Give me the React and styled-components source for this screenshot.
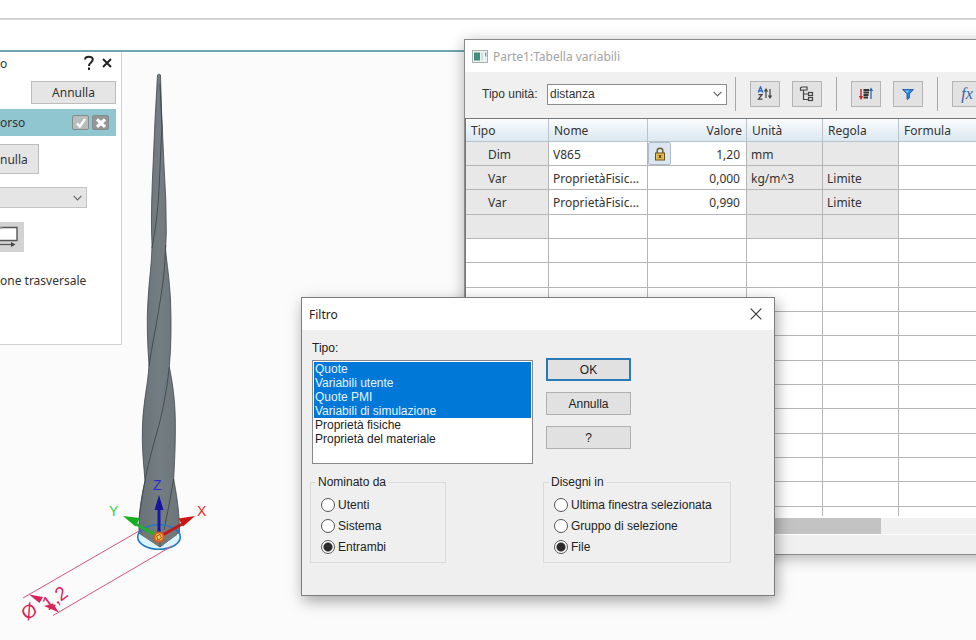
import { useState } from "react"
import styled, { createGlobalStyle } from "styled-components";

const variables = [
    { type: "Dim", name: "V865", locked: true, value: "1,20", unit: "mm", rule: "" },
    { type: "Var", name: "ProprietàFisic...", value: "0,000", unit: "kg/m^3", rule: "Limite" },
    { type: "Var", name: "ProprietàFisic...", value: "0,990", unit: "", rule: "Limite" },
    { type: "", name: "", value: "", unit: "", rule: "" },
]

const emptyRows = Array.from({ length: 11 }, (_, i) => i)

const filterTypes = [
    "Quote",
    "Variabili utente",
    "Quote PMI",
    "Variabili di simulazione",
    "Proprietà fisiche",
    "Proprietà del materiale",
]

export default function App(){
    return(
        <Page>
            <GlobalStyle />
            <Ribbon />
            <TabStrip />
            <Workspace>
                <Model />
                <CommandPanel />
                <VariableTable />
                <FilterDialog />
            </Workspace>
        </Page>
    )
}

function CommandPanel(){
    return(
        <Panel>
            <PanelTitle>
                <span>o</span>
                <PanelTools>
                    <PlainButton aria-label="Guida">
                        <svg width="12" height="16" viewBox="0 0 12 16" fill="none" stroke="#222" strokeWidth="2">
                            <path d="M2 4.5C2 0.8 9.8 0.6 9.8 4.6C9.8 7.6 6 7.4 6 11" />
                            <path d="M6 12.6V15" />
                        </svg>
                    </PlainButton>
                    <PlainButton aria-label="Chiudi pannello">
                        <svg width="10" height="10" viewBox="0 0 10 10" stroke="#222" strokeWidth="2">
                            <path d="M1 1L9 9M9 1L1 9" />
                        </svg>
                    </PlainButton>
                </PanelTools>
            </PanelTitle>
            <CancelButton>Annulla</CancelButton>
            <StepBar>
                <span>orso</span>
                <StepTools>
                    <StepButton aria-label="Accetta" $color="#b9bcbc">
                        <svg width="12" height="12" viewBox="0 0 12 12" fill="none" stroke="#fff" strokeWidth="2.4">
                            <path d="M2 6.4L4.8 9.4L10 2" />
                        </svg>
                    </StepButton>
                    <StepButton aria-label="Rifiuta" $color="#929898">
                        <svg width="12" height="12" viewBox="0 0 12 12" stroke="#fff" strokeWidth="3.2">
                            <path d="M2 2.4L10 9.8M10 2.4L2 9.8" />
                        </svg>
                    </StepButton>
                </StepTools>
            </StepBar>
            <ResetButton>nulla</ResetButton>
            <PanelSelectBox>
                <PanelSelect aria-label="Metodo">
                    <option></option>
                </PanelSelect>
                <Chevron />
            </PanelSelectBox>
            <ShapeButton aria-label="Sezione">
                <svg width="20" height="24" viewBox="0 0 20 24">
                    <path d="M-1 2.5H17V15.500H-1Z" fill="#fff" stroke="#555" strokeWidth="1.4" />
                    <path d="M-1 1.500L1 4.500L3 2.500" fill="#999" />
                    <path d="M0 19.500H13" stroke="#555" strokeWidth="1.2" />
                    <path d="M11 17L15.500 19.500L11 22Z" fill="#444" />
                </svg>
            </ShapeButton>
            <PanelText>one trasversale</PanelText>
        </Panel>
    )
}

function VariableTable(){
    return(
        <TableWindow>
            <WindowTitle $muted>
                <svg width="16" height="13" viewBox="0 0 16 13">
                    <rect x="0.5" y="0.5" width="15" height="12" fill="#eef1f1" stroke="#a9b0b0" />
                    <rect x="2" y="2.5" width="6" height="8" fill="#3f8f80" />
                    <rect x="9" y="2.5" width="2" height="8" fill="#d5dcdc" />
                    <rect x="13" y="2.5" width="1.4" height="4" fill="#6fa79d" />
                </svg>
                Parte1:Tabella variabili
            </WindowTitle>
            <Toolbar>
                <UnitLabel htmlFor="unit">Tipo unità:</UnitLabel>
                <UnitSelectBox>
                    <UnitSelect id="unit">
                        <option>distanza</option>
                    </UnitSelect>
                    <Chevron />
                </UnitSelectBox>
                <Separator />
                <ToolGroup>
                    <ToolButton aria-label="Ordina"><SortIcon /></ToolButton>
                    <ToolButton aria-label="Struttura"><TreeIcon /></ToolButton>
                </ToolGroup>
                <Separator />
                <ToolGroup>
                    <ToolButton aria-label="Ordine valori"><OrderIcon /></ToolButton>
                    <ToolButton aria-label="Filtro"><FunnelIcon /></ToolButton>
                </ToolGroup>
                <Separator />
                <ToolGroup>
                    <ToolButton aria-label="Funzioni"><Fx>fx</Fx></ToolButton>
                </ToolGroup>
            </Toolbar>
            <Sheet>
                <Grid>
                    <colgroup>
                        <col width="83" />
                        <col width="99" />
                        <col width="99" />
                        <col width="76" />
                        <col width="76" />
                        <col />
                    </colgroup>
                    <thead>
                        <tr>
                            <HeadCell>Tipo</HeadCell>
                            <HeadCell>Nome</HeadCell>
                            <HeadCell $right>Valore</HeadCell>
                            <HeadCell>Unità</HeadCell>
                            <HeadCell>Regola</HeadCell>
                            <HeadCell>Formula</HeadCell>
                        </tr>
                    </thead>
                    <tbody>
                        {variables.map((v, i) => (
                            <tr key={i}>
                                <Cell $shaded $indent>{v.type}</Cell>
                                <Cell>{v.name}</Cell>
                                <Cell $flush>
                                    <ValueBox>
                                        {v.locked && <LockButton aria-label="Blocca"><LockIcon /></LockButton>}
                                        <Value>{v.value}</Value>
                                    </ValueBox>
                                </Cell>
                                <Cell $shaded>{v.unit}</Cell>
                                <Cell $shaded>{v.rule}</Cell>
                                <Cell />
                            </tr>
                        ))}
                        {emptyRows.map(i => (
                            <tr key={i}>
                                <Cell /><Cell /><Cell /><Cell /><Cell /><Cell />
                            </tr>
                        ))}
                        <LastRow>
                            <Cell /><Cell /><Cell /><Cell /><Cell /><Cell />
                        </LastRow>
                    </tbody>
                </Grid>
                <ScrollTrack><ScrollThumb /></ScrollTrack>
            </Sheet>
            <StatusBar />
        </TableWindow>
    )
}

function FilterDialog(){
    const [types, setTypes] = useState(filterTypes.slice(0, 4))
    const [namedBy, setNamedBy] = useState("Entrambi")
    const [drawnIn, setDrawnIn] = useState("File")

    const changeTypes = (e) =>{
        setTypes(Array.from(e.target.selectedOptions, o => o.value))
    }

    return(
        <Dialog role="dialog" aria-labelledby="filter-title">
            <WindowTitle>
                <DialogName id="filter-title">Filtro</DialogName>
                <PlainButton aria-label="Chiudi">
                    <svg width="12" height="12" viewBox="0 0 12 12" stroke="#333" strokeWidth="1.1">
                        <path d="M0.7 0.7L11.3 11.3M11.3 0.7L0.7 11.3" />
                    </svg>
                </PlainButton>
            </WindowTitle>
            <DialogBody>
                <TypeField>
                    <label htmlFor="types">Tipo:</label>
                    <TypeList id="types" multiple value={types} onChange={changeTypes}>
                        {filterTypes.map(t => <option key={t}>{t}</option>)}
                    </TypeList>
                </TypeField>
                <Actions>
                    <ActionButton $primary>OK</ActionButton>
                    <ActionButton>Annulla</ActionButton>
                    <ActionButton>?</ActionButton>
                </Actions>
                <RadioGroup
                    title="Nominato da"
                    name="named"
                    width={136}
                    options={["Utenti", "Sistema", "Entrambi"]}
                    value={namedBy}
                    onChange={setNamedBy}
                />
                <RadioGroup
                    title="Disegni in"
                    name="drawn"
                    width={188}
                    options={["Ultima finestra selezionata", "Gruppo di selezione", "File"]}
                    value={drawnIn}
                    onChange={setDrawnIn}
                />
            </DialogBody>
        </Dialog>
    )
}

function RadioGroup({ title, name, width, options, value, onChange }){
    return(
        <Group $width={width}>
            <legend>{title}</legend>
            {options.map(o => (
                <RadioLabel key={o}>
                    <Radio type="radio" name={name} checked={value === o} onChange={() => onChange(o)} />
                    {o}
                </RadioLabel>
            ))}
        </Group>
    )
}

// twisted solid with its axes and the diameter dimension
function Model(){
    return(
        <Drawing width="240" height="588" viewBox="0 52 240 588" fill="none">
            <defs>
                <linearGradient id="steel" x1="0" y1="0" x2="1" y2="0">
                    <stop offset="0" stopColor="#687176" />
                    <stop offset="0.5" stopColor="#747d82" />
                    <stop offset="1" stopColor="#6c757a" />
                </linearGradient>
            </defs>
            <ellipse cx="159" cy="537" rx="21" ry="12" fill="#d9f3fa" />
            <path
                d="M157.5 75C158 74 160 74 160.5 75L161.5 110L164 165L165.8 200L166.3 232L165.6 250C167 264 169.5 280 170.5 300C171.4 322 171.3 345 169.3 367C172 380 175 398 175.3 420C175.6 445 174.5 462 173.7 479C176 492 179.5 510 179.5 532L160 547L139 533C138.5 515 141.5 498 145 481C143.5 462 141.5 445 142.5 425C143.5 400 148 384 149 365C147.5 345 146.5 320 148 300C149 280 152 262 152 245C151 225 151.5 205 152.2 185L155 120Z"
                fill="url(#steel)"
                stroke="#41484c"
                strokeWidth="0.8"
            />
            <path
                d="M160 84L162 128C160 160 159.5 185 158.3 200C157 220 154 236 152 248M165.6 245C165 268 163 284 160 302C156 328 152 345 149 366M169.3 367C166 395 162 415 157 432C152 450 147 468 145 481C142 494 140 508 139 520M173.7 479C170 500 166 522 160 547"
                stroke="#3f474b"
                strokeWidth="0.9"
            />
            <path d="M141 535L159 528L177 535L160 547Z" fill="#747876" />
            <path d="M160 530V547" stroke="#4c5254" />
            <ellipse cx="159" cy="537" rx="21.3" ry="12.3" stroke="#2478c0" strokeWidth="1.6" />

            <path d="M23 598L139 531M53 615.5L172 546" stroke="#cf5580" strokeWidth="1" />
            <path d="M29 594.5L43 597L39.500 603ZM59 612.5L53 603.500L44 606Z" fill="#d9235f" />
            <DimensionText transform="translate(27 621) rotate(-36)">Ø</DimensionText>
            <DimensionText transform="translate(48 611) rotate(-36)">1,2</DimensionText>

            <path d="M159 537V508" stroke="#1818a8" strokeWidth="3" />
            <path d="M154.5 510L159 495L163.5 510Z" fill="#1515a0" />
            <path d="M159 537L134 523" stroke="#22b030" strokeWidth="3" />
            <path d="M123 516L140 518L135.5 526.5Z" fill="#14b022" />
            <path d="M159 537L184 523" stroke="#c01818" strokeWidth="3" />
            <path d="M195 516L178.5 518.5L183 526.5Z" fill="#d01414" />
            <circle cx="159" cy="537" r="4.5" fill="#e8d060" stroke="#e05a18" strokeWidth="2" />
            <path d="M156.5 536L160 534.5L161.5 538L158 540Z" stroke="#b04010" strokeWidth="0.9" />
            <AxisText x="153" y="490" fill="#2a2ad0">Z</AxisText>
            <AxisText x="109" y="516" fill="#35d045">Y</AxisText>
            <AxisText x="197" y="516" fill="#dd2a2a">X</AxisText>
        </Drawing>
    )
}

function Chevron(){
    return(
        <ChevronSvg width="9" height="6" viewBox="0 0 9 6" fill="none" stroke="#666" strokeWidth="1.2">
            <path d="M0.6 0.8L4.5 4.8L8.4 0.8" />
        </ChevronSvg>
    )
}

function SortIcon(){
    return(
        <svg width="16" height="16" viewBox="0 0 16 16" fill="none" strokeWidth="1.5">
            <path d="M1.2 6.500L3.5 1L5.8 6.500M2 5H5" stroke="#2f6fd0" />
            <path d="M1.5 8.700H5L1.5 13.200H5.500" stroke="#444" strokeWidth="1.3" />
            <path d="M9 12V4M13 3V11" stroke="#444" strokeWidth="1.2" />
            <path d="M6.8 5.5L9 2L11.2 5.5ZM10.8 9.5L13 13L15.2 9.5Z" fill="#444" />
        </svg>
    )
}

function TreeIcon(){
    return(
        <svg width="16" height="16" viewBox="0 0 16 16" fill="none" stroke="#444" strokeWidth="1.2">
            <path d="M1.5 4.5V1.8L3 1H8V4H3L1.5 4.8M4.5 4V13.5H9M4.5 8H9" />
            <rect x="9.5" y="6.5" width="4" height="3" />
            <rect x="9.5" y="11.5" width="4" height="3" />
        </svg>
    )
}

function OrderIcon(){
    return(
        <svg width="16" height="16" viewBox="0 0 16 16" fill="none">
            <path d="M3 3V13" stroke="#c82828" strokeWidth="1.4" />
            <path d="M0.8 10L3 14L5.2 10Z" fill="#c82828" />
            <path d="M5.500 4H11M5.500 6.5H11M5.500 9H10.500M5.500 11.5H10" stroke="#333" strokeWidth="1.8" />
            <path d="M13 13V4" stroke="#2868b8" strokeWidth="1.3" />
            <path d="M10.8 5L13 1.5L15.2 5Z" fill="#2868b8" />
        </svg>
    )
}

function FunnelIcon(){
    return(
        <svg width="12" height="12" viewBox="0 0 12 12">
            <path d="M0.5 1.5H11.5L7.4 6V10L5 11.5V6Z" fill="#2484e0" stroke="#1c4f98" strokeWidth="0.8" />
            <path d="M2.5 2.5H7L5.6 5Z" fill="#74c4f8" />
        </svg>
    )
}

function LockIcon(){
    return(
        <svg width="12" height="14" viewBox="0 0 12 14">
            <path d="M3.2 6V3.8C3.2 0.4 8.8 0.4 8.8 3.8V6" fill="none" stroke="#70602c" strokeWidth="1.5" />
            <rect x="1.5" y="6" width="9" height="7" fill="#e9c25c" stroke="#6c5218" />
            <path d="M3 8.3H9M3 10.8H9" stroke="#b88a28" strokeWidth="0.8" />
            <path d="M6 8V11" stroke="#3f3010" strokeWidth="1.5" />
        </svg>
    )
}


const uiFont = `"Noto Sans", "Open Sans", sans-serif`
const dialogFont = `"Liberation Sans", Arial, sans-serif`

const GlobalStyle = createGlobalStyle`
    * {
        box-sizing: border-box;
    }
    body {
        margin: 0;
        font-family: ${uiFont};
        font-size: 12px;
        color: #333;
    }
    button, select, input {
        font: inherit;
        color: inherit;
        margin: 0;
    }
`

const Page = styled.div`
    display: flex;
    flex-direction: column;
    min-height: 100vh;
    overflow: hidden;
    background-color: white;
`

const Ribbon = styled.header`
    height: 20px;
    border-bottom: 2px solid #d4d4d4;
`

const TabStrip = styled.div`
    height: 32px;
    border-bottom: 2px solid #6fa6b0;
`

const Workspace = styled.main`
    flex: 1;
    position: relative;
    background-color: #fbfbfb;
`

const Drawing = styled.svg`
    position: absolute;
    top: 0;
    left: 0;
`

const AxisText = styled.text`
    font-family: ${dialogFont};
    font-size: 14px;
`

const DimensionText = styled.text`
    font-family: ${dialogFont};
    font-size: 19px;
    fill: #d9235f;
`

const Panel = styled.aside`
    position: relative;
    display: flex;
    flex-direction: column;
    align-items: flex-start;
    width: 122px;
    padding: 0 5px 54px 0;
    background-color: white;
    border: solid #d0d0d0;
    border-width: 0 1px 1px 0;
`

const PanelTitle = styled.div`
    display: flex;
    align-items: center;
    justify-content: space-between;
    width: 100%;
    height: 22px;
    padding-right: 4px;
`

const PanelTools = styled.div`
    display: flex;
    align-items: center;
    gap: 7px;
`

const PlainButton = styled.button`
    display: flex;
    padding: 0;
    border: none;
    background: none;
`

const CancelButton = styled.button`
    align-self: flex-end;
    width: 85px;
    height: 23px;
    margin-top: 7px;
    padding: 0;
    border: 1px solid #bdbdbd;
    background-color: #e5e5e5;
`

const StepBar = styled.div`
    display: flex;
    align-items: center;
    justify-content: space-between;
    width: 100%;
    height: 27px;
    margin-top: 5px;
    padding-right: 7px;
    background-color: #8fc6d0;
`

const StepTools = styled.div`
    display: flex;
    gap: 3px;
`

const StepButton = styled.button`
    display: flex;
    align-items: center;
    justify-content: center;
    width: 17px;
    height: 15px;
    padding: 0;
    border: 1px solid #858c8c;
    border-radius: 2px;
    background-color: ${p => p.$color};
`

const ResetButton = styled.button`
    width: 39px;
    height: 30px;
    margin-top: 8px;
    padding: 0 14px 0 0;
    border: 1px solid #bdbdbd;
    border-left: none;
    background-color: #e5e5e5;
`

const PanelSelectBox = styled.div`
    position: relative;
    width: 87px;
    height: 21px;
    margin-top: 13px;
`

const PanelSelect = styled.select`
    appearance: none;
    width: 100%;
    height: 100%;
    border: 1px solid #c3c3c3;
    border-left: none;
    border-radius: 0;
    background-color: #e5e5e5;
`

const ChevronSvg = styled.svg`
    position: absolute;
    right: 5px;
    top: 50%;
    margin-top: -3px;
    pointer-events: none;
`

const ShapeButton = styled.button`
    width: 24px;
    height: 30px;
    margin-top: 14px;
    padding: 0 4px 0 0;
    border: none;
    background-color: #d3d3d3;

    svg {
        display: block;
    }
`

const PanelText = styled.p`
    margin: 20px 0 0;
    line-height: 18px;
`

const TableWindow = styled.section`
    position: absolute;
    top: -13px;
    left: 464px;
    right: -30px;
    border: 1px solid #8b8b8b;
    background-color: #f0f0f0;
    box-shadow: 0 3px 14px rgba(0, 0, 0, 0.3);
`

const WindowTitle = styled.header`
    display: flex;
    align-items: center;
    gap: 5px;
    height: 32px;
    padding: 0 12px 0 7px;
    background-color: white;
    color: ${p => p.$muted ? "#a3a3a3" : "#222"};
`

const Toolbar = styled.div`
    display: flex;
    align-items: center;
    height: 46px;
    padding: 0 0 2px 17px;
    font-family: ${dialogFont};
`

const UnitLabel = styled.label`
    width: 65px;
`

const UnitSelectBox = styled.div`
    position: relative;
    width: 180px;
    height: 21px;
    margin-right: 8px;
`

const UnitSelect = styled.select`
    appearance: none;
    width: 100%;
    height: 100%;
    padding: 0 2px;
    border: 1px solid #8c8c8c;
    border-radius: 0;
    background-color: white;
`

const Separator = styled.div`
    width: 1px;
    height: 34px;
    margin-right: 14px;
    background-color: #a8a8a8;
`

const ToolGroup = styled.div`
    display: flex;
    gap: 12px;
    margin-right: 14px;
`

const ToolButton = styled.button`
    display: flex;
    align-items: center;
    justify-content: center;
    width: 30px;
    height: 26px;
    padding: 0;
    border: 1px solid #b4b4b4;
    background-color: #e2e2e2;
`

const Fx = styled.i`
    font: italic 16px "Liberation Serif", serif;
    color: #2e62a8;
`

const Sheet = styled.div`
    border: solid #777;
    border-width: 1px 0 0 1px;
    background-color: white;
`

const Grid = styled.table`
    width: 100%;
    table-layout: fixed;
    border-collapse: separate;
    border-spacing: 0;

    tbody tr {
        height: 24px;
    }
    tbody tr:nth-child(3n) {
        height: 25px;
    }
`

const HeadCell = styled.th`
    height: 23px;
    padding: 2px 4px 0 5px;
    border: solid #b9c3cc;
    border-width: 0 1px 1px 0;
    background: linear-gradient(#fafcfe, #dce7f0);
    font-weight: normal;
    line-height: 16px;
    text-align: ${p => p.$right ? "right" : "left"};
`

const Cell = styled.td`
    padding: ${p => p.$flush ? "0" : p.$indent ? "2px 0 0 22px" : "2px 0 0 4px"};
    border: solid #b6b6b6;
    border-width: 0 1px 1px 0;
    background-color: ${p => p.$shaded ? "#e8e8e8" : "white"};
    line-height: 16px;
    white-space: nowrap;
`

const LastRow = styled.tr`
    &&& {
        height: 9px;
    }
    ${Cell} {
        border-bottom: none;
    }
`

const ValueBox = styled.div`
    display: flex;
    align-items: center;
    padding-right: 6px;
`

const LockButton = styled.button`
    display: flex;
    align-items: center;
    justify-content: center;
    width: 23px;
    height: 23px;
    padding: 0;
    border: 1px solid #aebccb;
    border-radius: 2px;
    background-color: #dbe6f2;
`

const Value = styled.span`
    margin-left: auto;
    padding-top: 2px;
`

const ScrollTrack = styled.div`
    height: 19px;
    border: solid white;
    border-width: 2px 0 1px;
    background-color: #f0f0f0;
`

const ScrollThumb = styled.div`
    width: 415px;
    height: 16px;
    background-color: #c3c3c3;
`

const StatusBar = styled.footer`
    height: 19px;
`

const Dialog = styled.section`
    position: absolute;
    top: 245px;
    left: 301px;
    width: 474px;
    border: 1px solid #7d7d7d;
    background-color: #efefef;
    box-shadow: 2px 5px 14px rgba(0, 0, 0, 0.35);
`

const DialogName = styled.span`
    flex: 1;
`

const DialogBody = styled.div`
    display: grid;
    grid-template-columns: 233px 1fr;
    padding: 10px 10px 32px 8px;
    font-family: ${dialogFont};
    color: #222;
`

const TypeField = styled.div`
    display: flex;
    flex-direction: column;
    gap: 4px;
    padding-left: 2px;
    line-height: 16px;
`

const TypeList = styled.select`
    width: 221px;
    height: 104px;
    padding: 1px;
    border: 1px solid #888;
    border-radius: 0;
    background-color: white;
    overflow: hidden;

    option {
        min-height: 14px;
        padding: 0 1px;
        line-height: 14px;
    }
    option:checked {
        background: linear-gradient(#0078d7, #0078d7);
        color: #e4f3ff;
    }
`

const Actions = styled.div`
    display: flex;
    flex-direction: column;
    gap: 11px;
    padding: 18px 0 0 3px;
`

const ActionButton = styled.button`
    width: 85px;
    height: 23px;
    padding: 0;
    border: ${p => p.$primary ? "2px solid #2a7ab8" : "1px solid #b0b0b0"};
    background-color: #e1e1e1;
`

const Group = styled.fieldset`
    display: flex;
    flex-direction: column;
    justify-self: start;
    width: ${p => p.$width}px;
    margin: 10px 0 0;
    padding: 4px 0 5px 10px;
    border: 1px solid #dadada;

    legend {
        margin-left: -5px;
        padding: 0 2px;
        line-height: 16px;
    }
`

const RadioLabel = styled.label`
    display: flex;
    align-items: center;
    gap: 3px;
    height: 21px;
    white-space: nowrap;
`

const Radio = styled.input`
    appearance: none;
    width: 14px;
    height: 14px;
    border: 1px solid #555;
    border-radius: 50%;
    background-color: white;

    &:checked {
        background: radial-gradient(circle, #2b2b2b 4px, white 5px);
    }
`
